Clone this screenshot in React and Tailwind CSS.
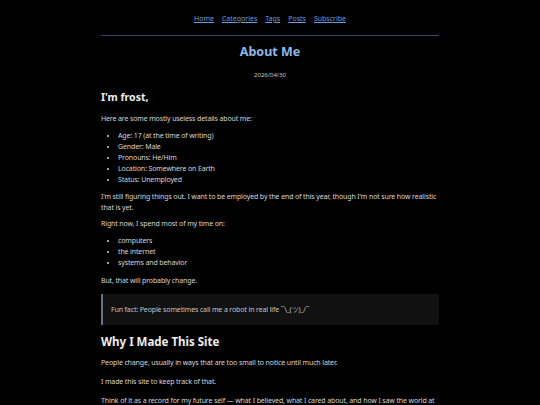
import React from 'react';

const NAV = ['Home', 'Categories', 'Tags', 'Posts', 'Subscribe'];

export default function App() {
  return (
    <div className="min-h-screen bg-black text-[#d6d6d6] font-['Noto_Sans',sans-serif] text-[7px] leading-[11px] tracking-[-0.13px]">
      <div className="mx-auto w-[338px]">
        <nav className="flex justify-center gap-[8px] pt-[13px] pb-[11px] text-[7px] tracking-normal">
          {NAV.map((n) => (
            <a key={n} href="#" className="text-[#6f9fd8] underline">{n}</a>
          ))}
        </nav>
        <div className="h-px bg-[#2c4a6e]" />
        <h1 className="mt-[6px] text-center text-[12.5px] leading-[20px] font-bold tracking-normal text-[#8db8e6]">About Me</h1>
        <p className="mt-[9px] text-center text-[6px] leading-[9px] tracking-normal text-[#c8c8c8]">2026/04/30</p>

        <h2 className="mt-[9px] text-[10.5px] leading-[16px] font-bold tracking-normal text-[#eeeeee]">I'm frost,</h2>
        <p className="mt-[8px]">Here are some mostly useless details about me:</p>
        <ul className="mt-[6px] ml-[17px] list-disc">
          <li>Age: 17 (at the time of writing)</li>
          <li>Gender: Male</li>
          <li>Pronouns: He/Him</li>
          <li>Location: Somewhere on Earth</li>
          <li>Status: Unemployed</li>
        </ul>
        <p className="mt-[6px]">I'm still figuring things out. I want to be employed by the end of this year, though I'm not sure how realistic that is yet.</p>
        <p className="mt-[5px]">Right now, I spend most of my time on:</p>
        <ul className="mt-[6px] ml-[17px] list-disc">
          <li>computers</li>
          <li>the internet</li>
          <li>systems and behavior</li>
        </ul>
        <p className="mt-[7px]">But, that will probably change.</p>
        <blockquote className="mt-[8px] bg-[#111111] border-l-2 border-[#6b7280] pl-[8px] py-[10px] text-[#c4c4c4]">
          Fun fact: People sometimes call me a robot in real life ¯\_(ツ)_/¯
        </blockquote>
        <h2 className="mt-[8px] text-[11.5px] leading-[17px] font-bold tracking-normal text-[#eeeeee]">Why I Made This Site</h2>
        <p className="mt-[7px]">People change, usually in ways that are too small to notice until much later.</p>
        <p className="mt-[8px]">I made this site to keep track of that.</p>
        <p className="mt-[8px]">Think of it as a record for my future self — what I believed, what I cared about, and how I saw the world at this point in my life.</p>
      </div>
    </div>
  );
}
